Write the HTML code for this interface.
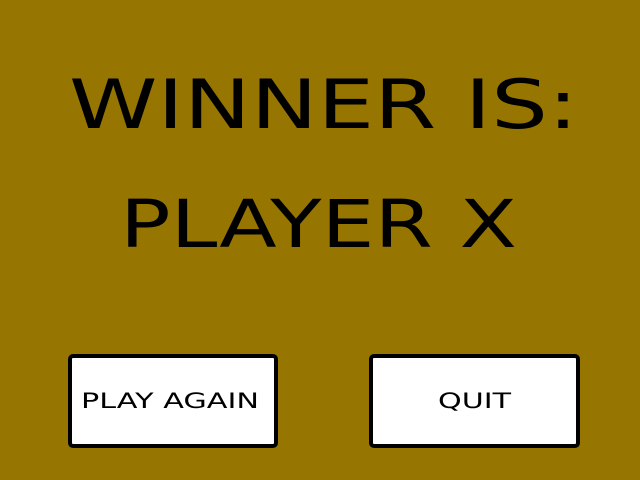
<!DOCTYPE html>
<html><head><style>
html,body{margin:0;padding:0;background:#967500;width:640px;height:480px;overflow:hidden}
</style></head><body>
<svg width="640" height="480" xmlns="http://www.w3.org/2000/svg" style="display:block">
<rect width="640" height="480" fill="#967500"/>
<g font-family="DejaVu Sans, sans-serif" fill="#000">
<text x="69" y="128" font-size="68" textLength="509" lengthAdjust="spacingAndGlyphs">WINNER IS:</text>
<text x="120" y="247" font-size="66" textLength="397" lengthAdjust="spacingAndGlyphs">PLAYER X</text>
</g>
<rect x="70" y="356" width="206" height="90" rx="3" fill="#fff" stroke="#000" stroke-width="4"/>
<rect x="371" y="356" width="207" height="90" rx="3" fill="#fff" stroke="#000" stroke-width="4"/>
<g font-family="DejaVu Sans, sans-serif" fill="#000" font-size="21">
<text x="81" y="408" textLength="178" lengthAdjust="spacingAndGlyphs">PLAY AGAIN</text>
<text x="438" y="408" textLength="73" lengthAdjust="spacingAndGlyphs">QUIT</text>
</g>
</svg>
</body></html>
